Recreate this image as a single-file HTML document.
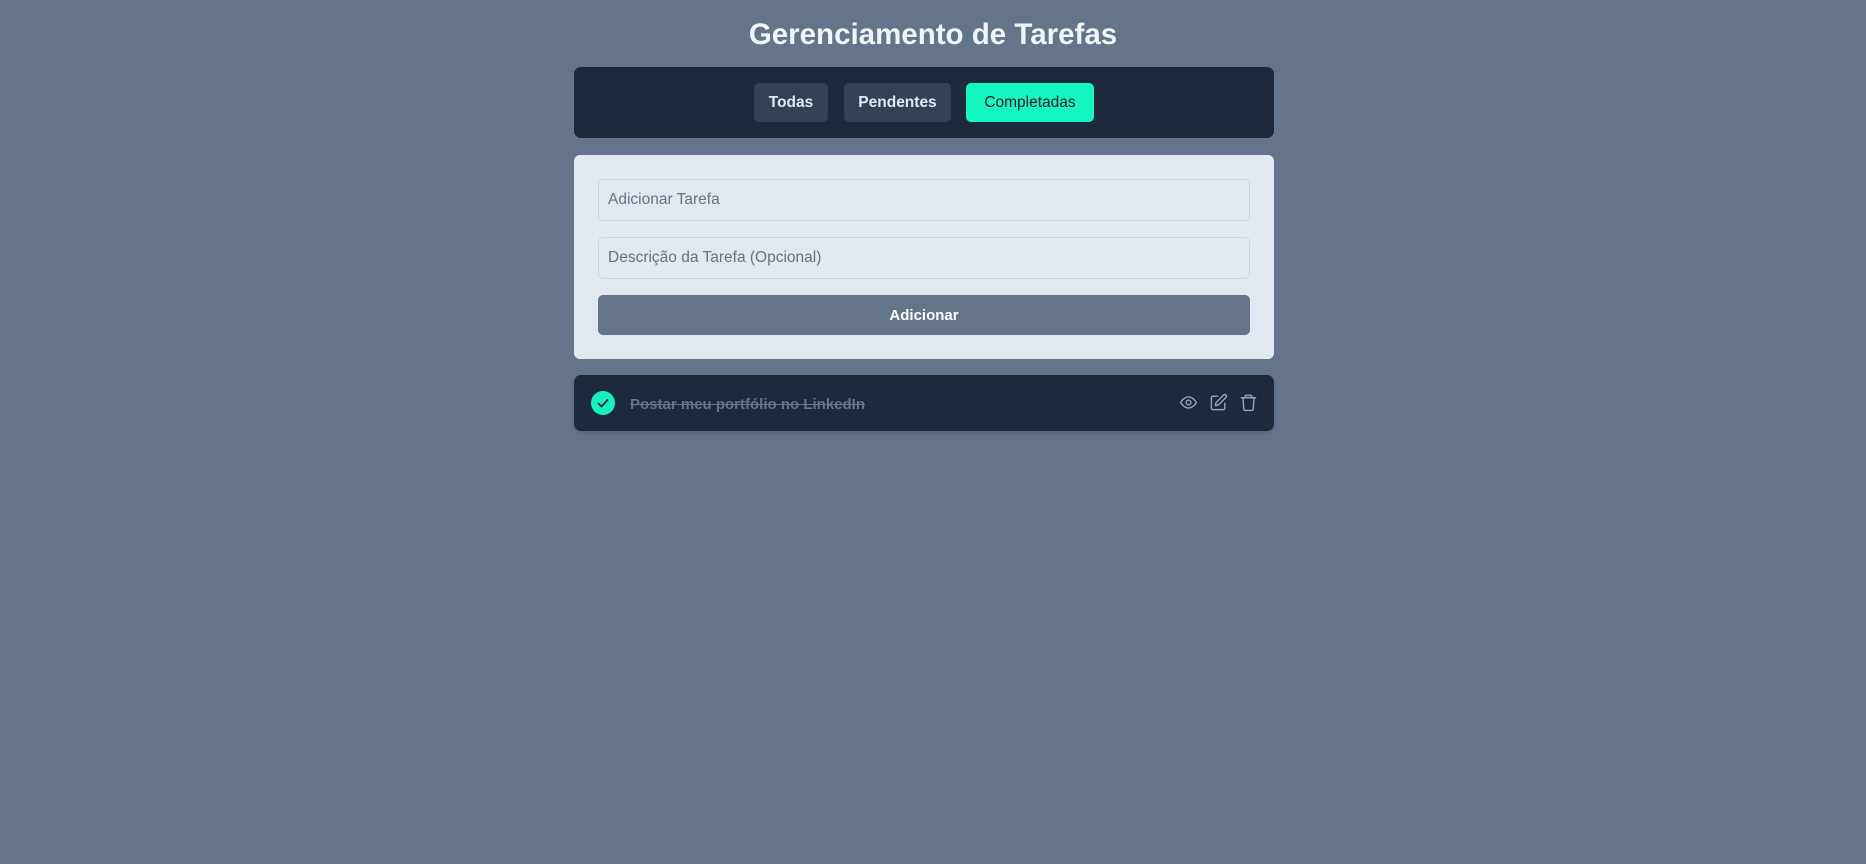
<!DOCTYPE html>
<html><head><meta charset="utf-8"><style>
*{box-sizing:border-box;margin:0;padding:0}
body{width:1866px;height:864px;background:#64748b;font-family:"Liberation Sans",sans-serif;position:relative;overflow:hidden}
h1{position:absolute;top:18px;left:0;width:1866px;text-align:center;color:#f1f5f9;font-size:29.5px;font-weight:bold}
.nav{position:absolute;left:574px;top:67px;width:700px;height:71px;background:#1e293b;border-radius:7px}
.b{position:absolute;top:16px;height:39px;border-radius:5px;background:#334155;color:#e2e8f0;font-weight:bold;font-size:15.5px;display:flex;align-items:center;justify-content:center}
.form{position:absolute;left:574px;top:155px;width:700px;height:204px;background:#e2e8f0;border-radius:6px}
.in{position:absolute;left:24px;width:652px;height:42px;border:1px solid #cbd5e1;border-radius:5px;color:#6b7280;font-size:15.5px;padding-left:9px;display:flex;align-items:center}
.add{position:absolute;left:24px;top:140px;width:652px;height:40px;background:#64748b;border-radius:5px;color:#fff;font-weight:bold;font-size:15px;display:flex;align-items:center;justify-content:center}
.task{position:absolute;left:574px;top:375px;width:700px;height:56px;background:#1e293b;border-radius:7px;box-shadow:0 2px 4px rgba(0,0,0,.15)}
.chk{position:absolute;left:17px;top:16px;width:24px;height:24px;border-radius:50%;background:#14f1c0}
.t{position:absolute;left:56px;top:21px;color:#64748b;font-size:15px;font-weight:bold;text-decoration:line-through}
svg.i{position:absolute;top:18px;width:19px;height:19px;fill:none;stroke:#94a3b8;stroke-width:1.8;stroke-linecap:round;stroke-linejoin:round}
</style></head><body>
<h1>Gerenciamento de Tarefas</h1>
<div class="nav">
<div class="b" style="left:180px;width:74px">Todas</div>
<div class="b" style="left:270px;width:107px">Pendentes</div>
<div class="b" style="left:392px;width:128px;background:#14f7c1;color:#0f172a;font-weight:normal">Completadas</div>
</div>
<div class="form">
<div class="in" style="top:24px">Adicionar Tarefa</div>
<div class="in" style="top:82px">Descrição da Tarefa (Opcional)</div>
<div class="add">Adicionar</div>
</div>
<div class="task">
<div class="chk"><svg width="24" height="24" viewBox="0 0 24 24"><path d="M7.5 12.5l3 3 6-6.5" fill="none" stroke="#1e293b" stroke-width="1.8" stroke-linecap="round" stroke-linejoin="round"/></svg></div>
<div class="t">Postar meu portfólio no LinkedIn</div>
<svg class="i" style="left:605px" viewBox="0 0 24 24"><path d="M2 12s4-7 10-7 10 7 10 7-4 7-10 7S2 12 2 12z"/><circle cx="12" cy="12" r="3"/></svg>
<svg class="i" style="left:635px" viewBox="0 0 24 24"><path d="M11 4H5a2 2 0 0 0-2 2v13a2 2 0 0 0 2 2h13a2 2 0 0 0 2-2v-6"/><path d="M18.5 2.5a2.1 2.1 0 0 1 3 3L12 15l-4 1 1-4z"/></svg>
<svg class="i" style="left:665px" viewBox="0 0 24 24"><path d="M3 6h18M8 6V4a1 1 0 0 1 1-1h6a1 1 0 0 1 1 1v2M5 6l1 14a2 2 0 0 0 2 2h8a2 2 0 0 0 2-2l1-14"/></svg>
</div>
</body></html>
